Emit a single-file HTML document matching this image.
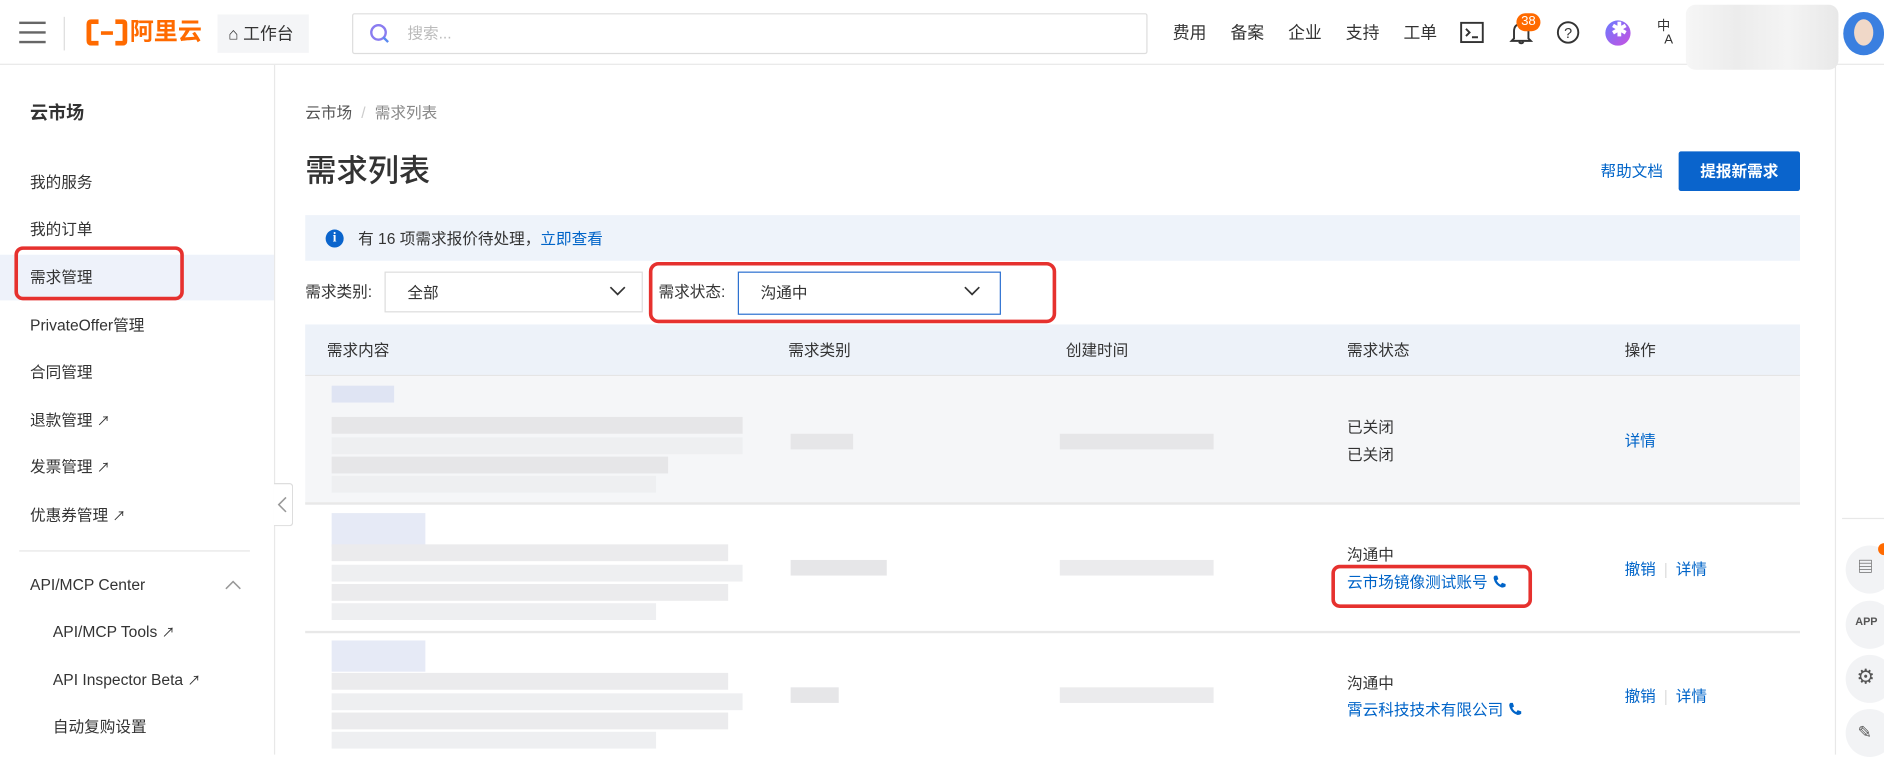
<!DOCTYPE html>
<html><head><meta charset="utf-8">
<style>
*{box-sizing:border-box;margin:0;padding:0}
html,body{width:1884px;height:754px;overflow:hidden;background:#fff}
body{font-family:"Liberation Sans","Noto Sans CJK SC",sans-serif;color:#333}
#w{position:absolute;left:0;top:0;width:1568px;height:628px;transform:scale(1.2016);transform-origin:0 0;font-size:13px}
.a{position:absolute}
.t{position:absolute;white-space:nowrap;line-height:1}
.blue{color:#0064c8}
.g{position:absolute;background:#e6e6e8}
.gl{position:absolute;background:#eeeff1}
.gb{position:absolute;background:#dfe4f3}
.ph{display:inline-block;vertical-align:-1px;margin-left:4px}
</style></head><body><div id="w">
<div class="a" style="left:0;top:0;width:1568px;height:54px;border-bottom:1px solid #e8e8e8;background:#fff"></div>
<div class="a" style="left:16px;top:18px;width:22px;height:2px;background:#666"></div>
<div class="a" style="left:16px;top:26px;width:22px;height:2px;background:#666"></div>
<div class="a" style="left:16px;top:34px;width:22px;height:2px;background:#666"></div>
<div class="a" style="left:53px;top:14px;width:1px;height:28px;background:#ddd"></div>
<svg class="a" style="left:72px;top:16px" width="34" height="22" viewBox="0 0 34 22"><path d="M10 2H4Q2 2 2 4V18Q2 20 4 20H10M24 2H30Q32 2 32 4V18Q32 20 30 20H24" fill="none" stroke="#ff6a00" stroke-width="4"/><rect x="12" y="10" width="10" height="3" fill="#ff6a00"/></svg>
<div class="t" style="left:108px;top:17px;font-size:20px;font-weight:bold;color:#ff6a00">阿里云</div>
<div class="a" style="left:181px;top:12px;width:76px;height:32px;background:#f4f5f7"></div>
<div class="t" style="left:190px;top:21px;font-size:14px">⌂ 工作台</div>
<div class="a" style="left:293px;top:11px;width:662px;height:34px;border:1px solid #ddd;border-radius:2px"></div>
<svg class="a" style="left:307px;top:19px" width="18" height="18"><circle cx="8" cy="8" r="6" fill="none" stroke="#8a7cf0" stroke-width="2"/><path d="M12 12L16 16" stroke="#5a8af0" stroke-width="2"/></svg>
<div class="t" style="left:339px;top:21px;font-size:13px;color:#bbb">搜索...</div>
<div class="t" style="left:976px;top:20px;font-size:14px">费用</div>
<div class="t" style="left:1024px;top:20px;font-size:14px">备案</div>
<div class="t" style="left:1072px;top:20px;font-size:14px">企业</div>
<div class="t" style="left:1120px;top:20px;font-size:14px">支持</div>
<div class="t" style="left:1168px;top:20px;font-size:14px">工单</div>
<svg class="a" style="left:1215px;top:18px" width="20" height="18"><rect x="1" y="1" width="18" height="16" fill="none" stroke="#333" stroke-width="1.6"/><path d="M5 6L8 9L5 12M10 13H15" stroke="#333" stroke-width="1.6" fill="none"/></svg>
<svg class="a" style="left:1256px;top:16px" width="20" height="22"><path d="M4 16V10Q4 4 10 4Q16 4 16 10V16L18 18H2Z M8 19Q10 21 12 19" fill="none" stroke="#333" stroke-width="1.6"/></svg>
<div class="a" style="left:1262px;top:11px;width:20px;height:15px;border-radius:8px;background:#ff6a00;color:#fff;font-size:11px;text-align:center;line-height:15px">38</div>
<svg class="a" style="left:1295px;top:17px" width="20" height="20"><circle cx="10" cy="10" r="8.5" fill="none" stroke="#333" stroke-width="1.6"/><text x="10" y="14.5" font-size="12" text-anchor="middle" font-family="Liberation Sans" fill="#333">?</text></svg>
<div class="a" style="left:1336px;top:17px;width:21px;height:21px;border-radius:50%;background:linear-gradient(135deg,#6a7bff,#c850e0)"></div>
<div class="t" style="left:1341px;top:18px;font-size:16px;color:#fff;font-weight:bold">✱</div>
<div class="t" style="left:1379px;top:17px;font-size:11px;line-height:11px">中<br><span style="margin-left:6px">A</span></div>
<div class="a" style="left:1403px;top:4px;width:127px;height:54px;border-radius:8px;background:linear-gradient(90deg,#f6f6f6,#ececec,#f4f4f4,#e8e8e8)"></div>
<div class="a" style="left:1534px;top:10px;width:34px;height:36px;border-radius:50%;background:#3a7fe0"></div>
<div class="a" style="left:1543px;top:16px;width:16px;height:22px;border-radius:50%;background:#f0d8c8"></div>
<div class="a" style="left:228px;top:54px;width:1px;height:574px;background:#e8e8e8"></div>
<div class="t" style="left:25px;top:87px;font-size:15px;font-weight:bold">云市场</div>
<div class="t" style="left:25px;top:145px">我的服务</div>
<div class="t" style="left:25px;top:184px">我的订单</div>
<div class="a" style="left:0;top:212px;width:228px;height:38px;background:#eef2fa"></div>
<div class="t" style="left:25px;top:224px">需求管理</div>
<div class="a" style="left:12px;top:205px;width:141px;height:45px;border:3px solid #e6312e;border-radius:7px"></div>
<div class="t" style="left:25px;top:264px">PrivateOffer管理</div>
<div class="t" style="left:25px;top:303px">合同管理</div>
<div class="t" style="left:25px;top:343px">退款管理 <span style="font-size:11px">↗</span></div>
<div class="t" style="left:25px;top:382px">发票管理 <span style="font-size:11px">↗</span></div>
<div class="t" style="left:25px;top:422px">优惠券管理 <span style="font-size:11px">↗</span></div>
<div class="a" style="left:16px;top:458px;width:192px;height:1px;background:#e5e5e5"></div>
<div class="t" style="left:25px;top:480px">API/MCP Center</div>
<svg class="a" style="left:187px;top:482px" width="14" height="10"><path d="M1 8L7 2L13 8" fill="none" stroke="#999" stroke-width="1.3"/></svg>
<div class="t" style="left:44px;top:519px">API/MCP Tools <span style="font-size:11px">↗</span></div>
<div class="t" style="left:44px;top:559px">API Inspector Beta <span style="font-size:11px">↗</span></div>
<div class="t" style="left:44px;top:598px">自动复购设置</div>
<div class="a" style="left:228px;top:402px;width:16px;height:36px;border:1px solid #ddd;border-left:none;background:#fff;border-radius:0 3px 3px 0"></div>
<svg class="a" style="left:231px;top:413px" width="8" height="14"><path d="M7 1L1 7L7 13" fill="none" stroke="#999" stroke-width="1.3"/></svg>
<div class="t" style="left:254px;top:87px;color:#555">云市场 <span style="color:#ccc;margin:0 4px">/</span> <span style="color:#888">需求列表</span></div>
<div class="t" style="left:254px;top:129px;font-size:26px;font-weight:500">需求列表</div>
<div class="t blue" style="left:1332px;top:136px">帮助文档</div>
<div class="a" style="left:1397px;top:126px;width:101px;height:33px;background:#0a64cc;color:#fff;font-weight:bold;text-align:center;line-height:33px;border-radius:2px">提报新需求</div>
<div class="a" style="left:254px;top:179px;width:1244px;height:38px;background:#eef3fa"></div>
<div class="a" style="left:271px;top:191px;width:15px;height:15px;border-radius:50%;background:#0a64cc;color:#fff;font-size:11px;font-weight:bold;text-align:center;line-height:15px;font-family:'Liberation Serif',serif">i</div>
<div class="t" style="left:298px;top:192px">有 16 项需求报价待处理，<span class="blue">立即查看</span></div>
<div class="t" style="left:254px;top:236px">需求类别:</div>
<div class="a" style="left:320px;top:226px;width:215px;height:34px;border:1px solid #ddd"></div>
<div class="t" style="left:339px;top:237px">全部</div>
<svg class="a" style="left:507px;top:238px" width="14" height="9"><path d="M1 1L7 7L13 1" fill="none" stroke="#333" stroke-width="1.4"/></svg>
<div class="t" style="left:548px;top:236px">需求状态:</div>
<div class="a" style="left:614px;top:226px;width:219px;height:36px;border:1px solid #2a6fd0"></div>
<div class="t" style="left:633px;top:237px">沟通中</div>
<svg class="a" style="left:802px;top:238px" width="14" height="9"><path d="M1 1L7 7L13 1" fill="none" stroke="#333" stroke-width="1.4"/></svg>
<div class="a" style="left:540px;top:218px;width:339px;height:51px;border:3px solid #e6312e;border-radius:8px"></div>
<div class="a" style="left:254px;top:270px;width:1244px;height:43px;background:#edf2f9;border-bottom:1px solid #e5e5e5"></div>
<div class="t" style="left:272px;top:285px">需求内容</div>
<div class="t" style="left:656px;top:285px">需求类别</div>
<div class="t" style="left:887px;top:285px">创建时间</div>
<div class="t" style="left:1121px;top:285px">需求状态</div>
<div class="t" style="left:1352px;top:285px">操作</div>
<div class="a" style="left:254px;top:313px;width:1244px;height:107px;background:#f5f6f8;border-bottom:2px solid #e8e8e8"></div>
<div class="a" style="left:254px;top:525px;width:1244px;height:2px;background:#e8e8e8"></div>
<div class="gb" style="left:276px;top:321px;width:52px;height:14px"></div>
<div class="g" style="left:276px;top:347px;width:342px;height:14px"></div>
<div class="gl" style="left:276px;top:364px;width:342px;height:14px"></div>
<div class="g" style="left:276px;top:380px;width:280px;height:14px"></div>
<div class="gl" style="left:276px;top:396px;width:270px;height:14px"></div>
<div class="g" style="left:658px;top:361px;width:52px;height:13px"></div>
<div class="g" style="left:882px;top:361px;width:128px;height:13px"></div>
<div class="t" style="left:1121px;top:349px">已关闭</div>
<div class="t" style="left:1121px;top:372px">已关闭</div>
<div class="t blue" style="left:1352px;top:360px">详情</div>
<div class="gb" style="left:276px;top:427px;width:78px;height:28px;background:#e6eaf6"></div>
<div class="g" style="left:276px;top:453px;width:330px;height:14px;background:#ebebed"></div>
<div class="gl" style="left:276px;top:470px;width:342px;height:14px"></div>
<div class="g" style="left:276px;top:486px;width:330px;height:14px;background:#ebebed"></div>
<div class="gl" style="left:276px;top:502px;width:270px;height:14px"></div>
<div class="g" style="left:658px;top:466px;width:80px;height:13px"></div>
<div class="g" style="left:882px;top:466px;width:128px;height:13px;background:#ebebed"></div>
<div class="t" style="left:1121px;top:455px">沟通中</div>
<div class="t blue" style="left:1121px;top:478px">云市场镜像测试账号<svg class="ph" width="12" height="12" viewBox="0 0 12 12"><path d="M2 1L4 1L5 4L3.5 5Q5 8 7 8.5L8 7L11 8L11 10Q10 11 8 11Q2 9 1 3Q1 1.5 2 1Z" fill="#0064c8"/></svg></div>
<div class="a" style="left:1108px;top:470px;width:167px;height:36px;border:3px solid #e6312e;border-radius:7px"></div>
<div class="t blue" style="left:1352px;top:467px">撤销 <span style="color:#ddd;margin:0 3px">|</span> 详情</div>
<div class="gb" style="left:276px;top:533px;width:78px;height:26px;background:#e6eaf6"></div>
<div class="g" style="left:276px;top:560px;width:330px;height:14px;background:#ebebed"></div>
<div class="gl" style="left:276px;top:577px;width:342px;height:14px"></div>
<div class="g" style="left:276px;top:593px;width:330px;height:14px;background:#ebebed"></div>
<div class="gl" style="left:276px;top:609px;width:270px;height:14px"></div>
<div class="g" style="left:658px;top:572px;width:40px;height:13px"></div>
<div class="g" style="left:882px;top:572px;width:128px;height:13px;background:#ebebed"></div>
<div class="t" style="left:1121px;top:562px">沟通中</div>
<div class="t blue" style="left:1121px;top:584px">霄云科技技术有限公司<svg class="ph" width="12" height="12" viewBox="0 0 12 12"><path d="M2 1L4 1L5 4L3.5 5Q5 8 7 8.5L8 7L11 8L11 10Q10 11 8 11Q2 9 1 3Q1 1.5 2 1Z" fill="#0064c8"/></svg></div>
<div class="t blue" style="left:1352px;top:573px">撤销 <span style="color:#ddd;margin:0 3px">|</span> 详情</div>
<div class="a" style="left:1527px;top:54px;width:1px;height:574px;background:#e8e8e8"></div>
<div class="a" style="left:1533px;top:431px;width:35px;height:1px;background:#e8e8e8"></div>
<div class="a" style="left:1536px;top:454px;width:40px;height:40px;border-radius:50%;background:#f2f3f5"></div>
<div class="a" style="left:1563px;top:452px;width:10px;height:10px;border-radius:50%;background:#ff6a00"></div>
<div class="a" style="left:1536px;top:500px;width:40px;height:40px;border-radius:50%;background:#f2f3f5"></div>
<div class="a" style="left:1536px;top:545px;width:40px;height:40px;border-radius:50%;background:#f2f3f5"></div>
<div class="a" style="left:1536px;top:590px;width:40px;height:40px;border-radius:50%;background:#f2f3f5"></div>
<div class="t" style="left:1546px;top:465px;font-size:13px;color:#555">▤</div>
<div class="t" style="left:1544px;top:513px;font-size:9px;color:#555;font-weight:bold">APP</div>
<div class="t" style="left:1545px;top:555px;font-size:17px;color:#555">⚙</div>
<div class="t" style="left:1546px;top:602px;font-size:14px;color:#555">✎</div>
</div></body></html>
